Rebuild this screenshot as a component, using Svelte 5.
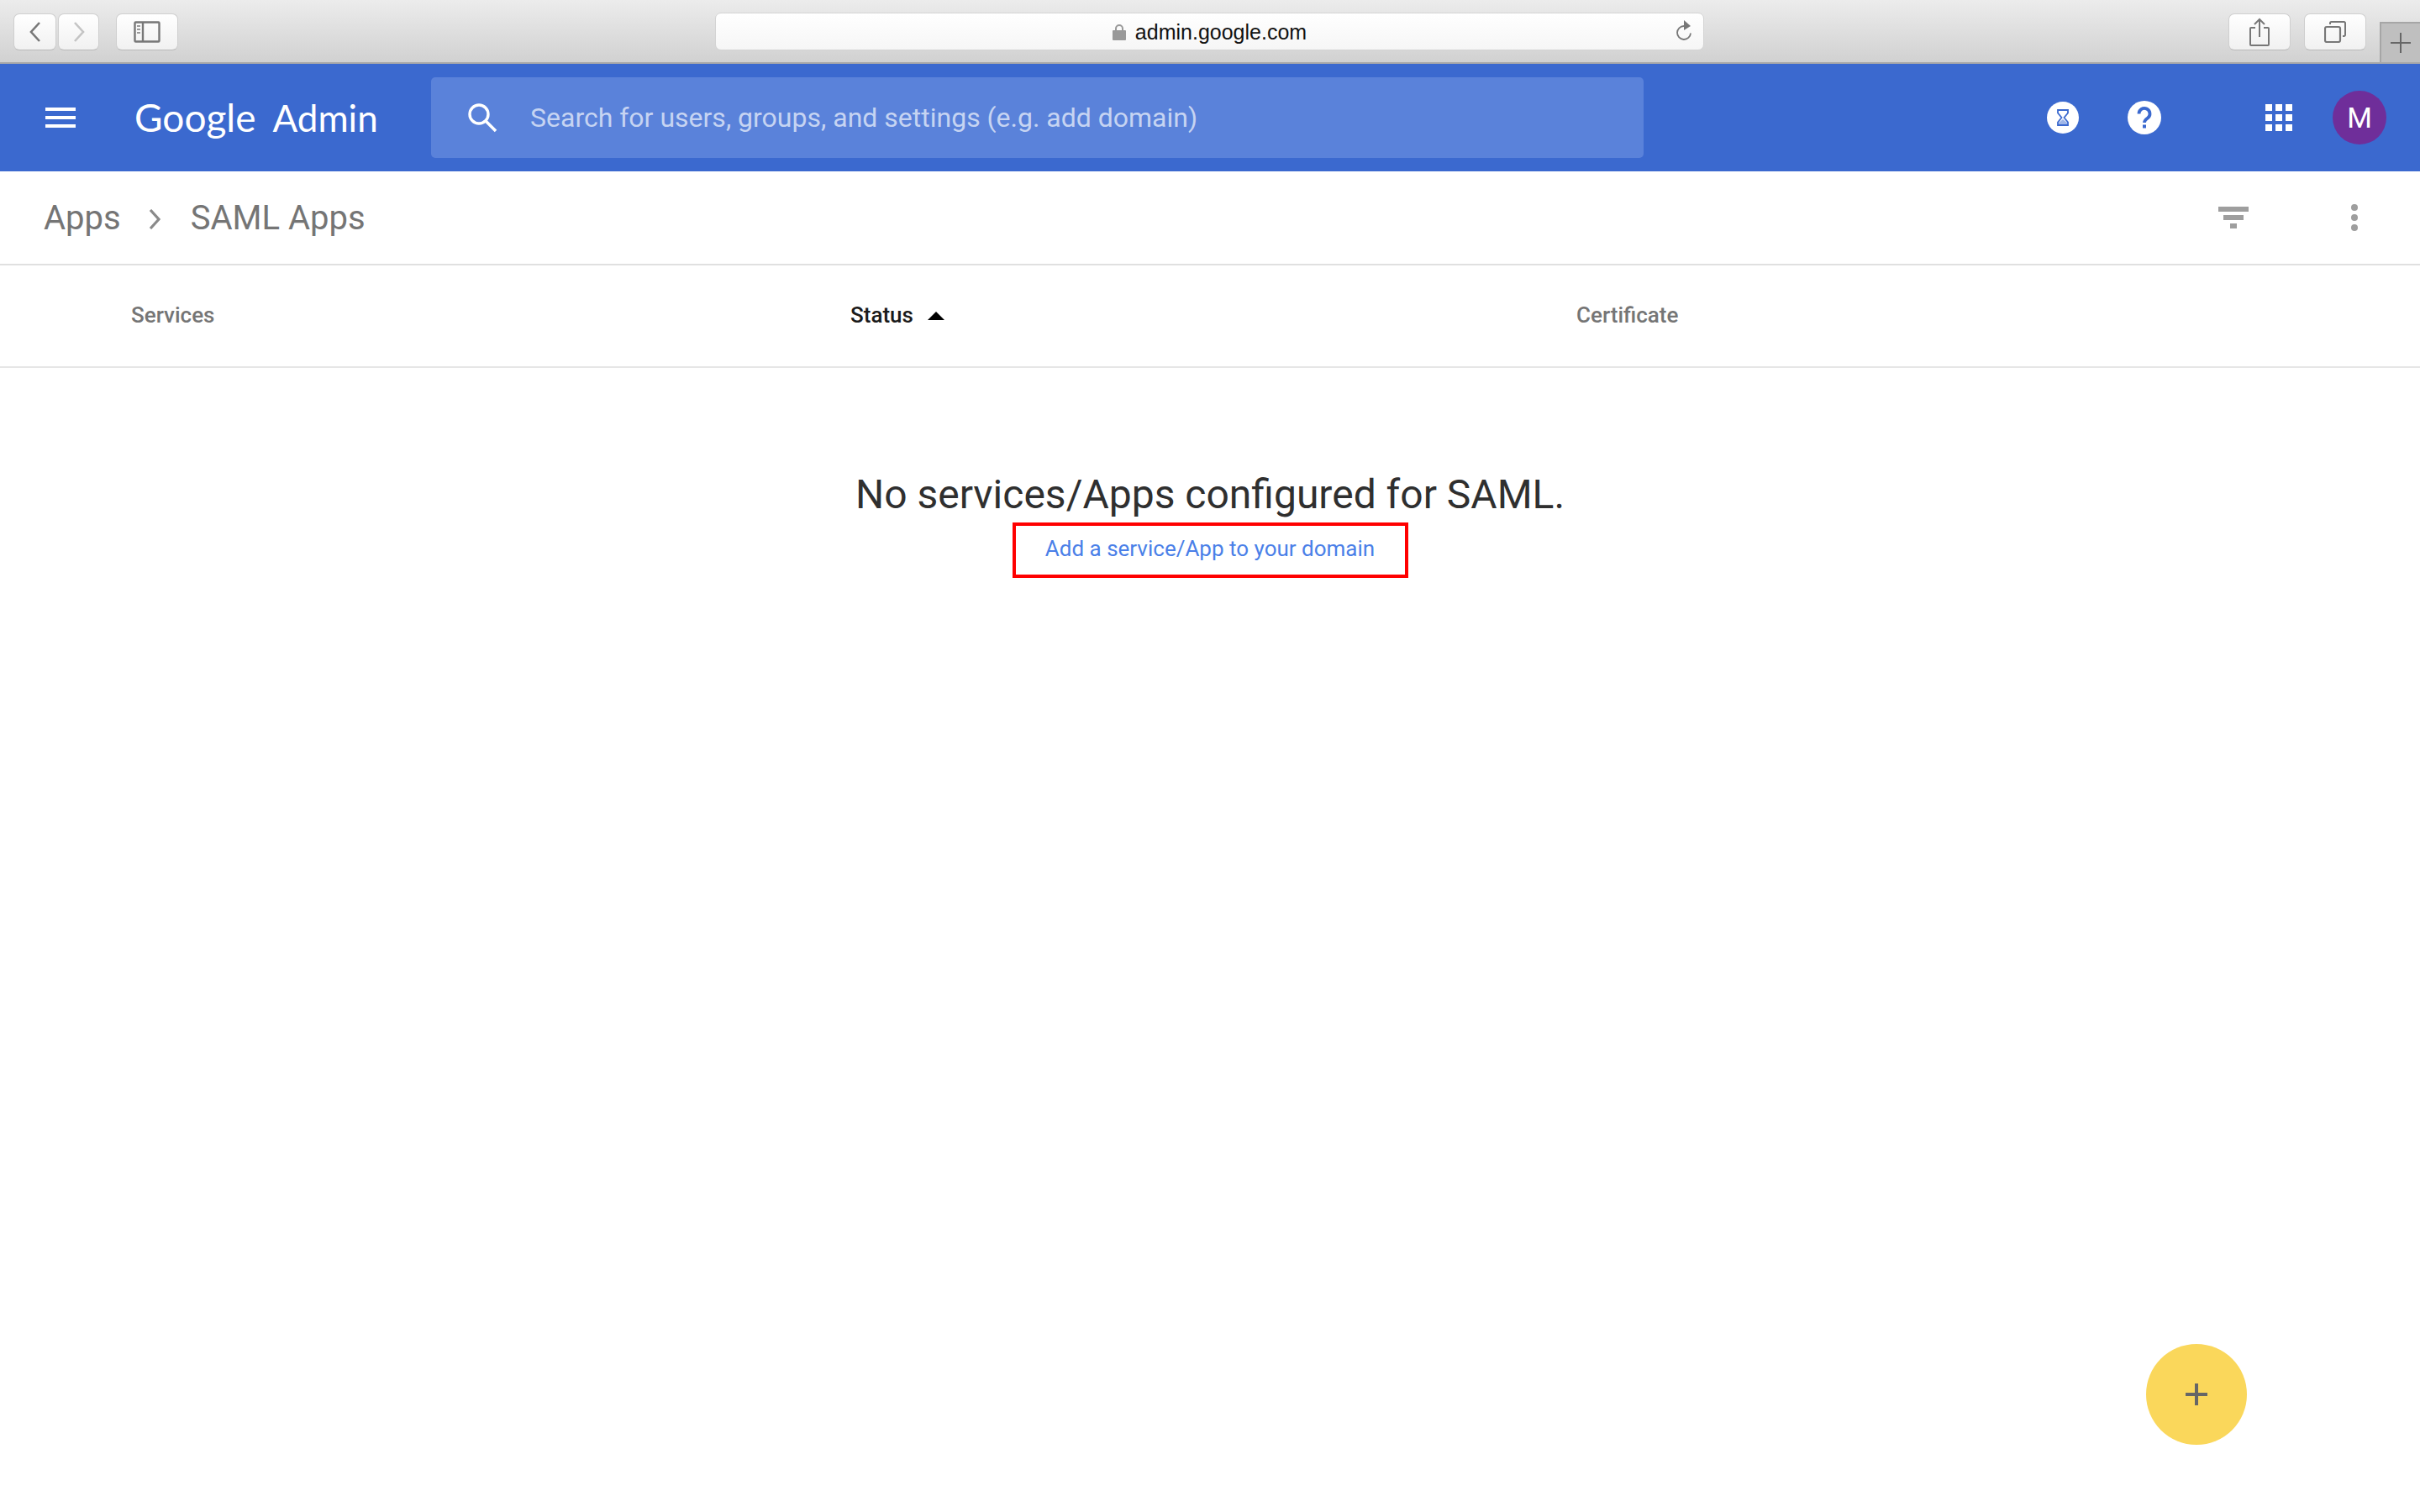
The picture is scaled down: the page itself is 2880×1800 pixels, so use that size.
<script>
  // Safari window with the Google Admin SAML Apps page, empty state
  const columns = [
    { label: "Services", width: 856 },
    { label: "Status", width: 864, sorted: true },
    { label: "Certificate" }
  ];
</script>

<div class="page">
  <div class="chrome">
    <div class="nav-group">
      <button class="tool back" aria-label="Back">
        <svg width="20" height="26" viewBox="0 0 20 26"><path d="M15 2 5 13l10 11" fill="none" stroke="#777" stroke-width="2.6" /></svg>
      </button>
      <button class="tool forward" aria-label="Forward">
        <svg width="20" height="26" viewBox="0 0 20 26"><path d="M5 2l10 11L5 24" fill="none" stroke="#c4c4c4" stroke-width="2.6" /></svg>
      </button>
    </div>
    <button class="tool sidebar" aria-label="Sidebar">
      <svg width="32" height="26" viewBox="0 0 32 26">
        <rect x="1.5" y="1.5" width="29" height="23" rx="1" fill="none" stroke="#777" stroke-width="2.4" />
        <path d="M11 1.5v23" stroke="#777" stroke-width="2.4" />
        <path d="M4 6h4M4 10h4M4 14h4" stroke="#999" stroke-width="2" />
      </svg>
    </button>
    <div class="address">
      <svg class="lock" width="16" height="20" viewBox="0 0 16 20">
        <path d="M4 9V6a4 4 0 0 1 8 0v3" fill="none" stroke="#999" stroke-width="2" />
        <rect y="8" width="16" height="12" rx="1" fill="#999" />
      </svg>
      <span class="url">admin.google.com</span>
      <svg class="reload" width="20" height="28" viewBox="0 0 20 28">
        <path d="M10 8a8 8 0 1 0 8 8.500" fill="none" stroke="#777" stroke-width="1.800" />
        <path d="M10 1l8 7-8 5z" fill="#777" />
      </svg>
    </div>
    <button class="tool share" aria-label="Share">
      <svg width="24" height="34" viewBox="0 0 24 34">
        <path d="M7 12H2a1 1 0 0 0-1 1v19a1 1 0 0 0 1 1h20a1 1 0 0 0 1-1V13a1 1 0 0 0-1-1h-5" fill="none" stroke="#777" stroke-width="2" />
        <path d="M12 23V2M6 8l6-6 6 6" fill="none" stroke="#777" stroke-width="2" />
      </svg>
    </button>
    <button class="tool tabs" aria-label="Tabs">
      <svg width="26" height="26" viewBox="0 0 26 26">
        <rect x="1" y="7" width="18" height="18" rx="2" fill="none" stroke="#777" stroke-width="2.2" />
        <path d="M7 4V2.5A1.5 1.5 0 0 1 8.500 1h15A1.500 1.500 0 0 1 25 2.500v14a1.500 1.500 0 0 1-1.500 1.500H22" fill="none" stroke="#777" stroke-width="2" />
      </svg>
    </button>
    <div class="new-tab">
      <svg width="24" height="24" viewBox="0 0 24 24"><path d="M12 0v24M0 12h24" stroke="#666" stroke-width="2" /></svg>
    </div>
  </div>

  <header class="topbar">
    <div class="menu"><span></span><span></span><span></span></div>
    <div class="logo"><span class="google">Google</span><span class="admin">Admin</span></div>
    <div class="search">
      <svg width="36" height="36" viewBox="0 0 36 36">
        <circle cx="14" cy="14" r="11" fill="none" stroke="#fff" stroke-width="3.4" />
        <path d="M22 22l12 12" stroke="#fff" stroke-width="3.6" />
      </svg>
      <span>Search for users, groups, and settings (e.g. add domain)</span>
    </div>
    <svg class="hourglass" width="38" height="38" viewBox="0 0 38 38">
      <circle cx="19" cy="19" r="19" fill="#fff" />
      <path d="M13 10h12v3.500L20.500 19l4.500 5.500V28H13v-3.500L17.500 19 13 13.500z" fill="none" stroke="#3b69cf" stroke-width="1.800" />
      <path d="M14 27v-2l5-4 5 4v2z" fill="#9fb6e8" />
    </svg>
    <svg class="help" width="40" height="40" viewBox="0 0 40 40">
      <circle cx="20" cy="20" r="20" fill="#fff" />
      <path d="M13.500 15.500a6.500 6.500 0 1 1 10.500 5c-2.300 1.800-4 2.800-4 5.500" fill="none" stroke="#3b69cf" stroke-width="3.800" />
      <rect x="18" y="28.500" width="4" height="4" fill="#3b69cf" />
    </svg>
    <svg class="apps" width="32" height="32" viewBox="0 0 32 32" fill="#fff">
      {#each [0, 12, 24] as y}
        {#each [0, 12, 24] as x}
          <rect {x} {y} width="8" height="8" />
        {/each}
      {/each}
    </svg>
    <div class="avatar">M</div>
  </header>

  <main class="content">
    <div class="breadcrumb">
      <span>Apps</span>
      <svg width="15" height="24" viewBox="0 0 15 24"><path d="M2 1l10 11L2 23" fill="none" stroke="#8a8a8a" stroke-width="3.200" /></svg>
      <span>SAML Apps</span>
      <svg class="filter" width="36" height="26" viewBox="0 0 36 26" fill="#9e9e9e">
        <rect width="36" height="6" />
        <rect x="6" y="10" width="24" height="6" />
        <rect x="14" y="20" width="8" height="6" />
      </svg>
      <svg class="more" width="8" height="32" viewBox="0 0 8 32" fill="#9e9e9e">
        <circle cx="4" cy="4" r="4" />
        <circle cx="4" cy="16" r="4" />
        <circle cx="4" cy="28" r="4" />
      </svg>
    </div>

    <div class="table-head">
      {#each columns as col}
        <div class="col" class:sorted={col.sorted} style:width={col.width ? col.width + "px" : null}>
          {col.label}
          {#if col.sorted}<span class="arrow"></span>{/if}
        </div>
      {/each}
    </div>

    <div class="empty">
      <h1>No services/Apps configured for SAML.</h1>
      <a class="add-link" href="#add">Add a service/App to your domain</a>
    </div>

    <button class="fab" aria-label="Add">
      <svg width="26" height="26" viewBox="0 0 26 26"><path d="M13 0v26M0 13h26" stroke="#666" stroke-width="4" /></svg>
    </button>
  </main>
</div>

<style>
  :global(body) {
    margin: 0;
    background: #fff;
  }

  .page {
    width: 2880px;
    height: 1800px;
    overflow: hidden;
    display: flex;
    flex-direction: column;
    font-family: Roboto, "Liberation Sans", sans-serif;
  }

  /* browser chrome */
  .chrome {
    height: 74px;
    flex: none;
    display: flex;
    align-items: flex-start;
    box-sizing: content-box;
    border-bottom: 2px solid #a9a9a9;
    background: linear-gradient(#ececec, #d1d1d1);
  }

  .nav-group {
    display: flex;
    gap: 2px;
    margin: 16px 0 0 16px;
  }

  .tool {
    height: 44px;
    margin-top: 16px;
    padding: 0;
    display: flex;
    align-items: center;
    justify-content: center;
    border: 1px solid #cfcfcf;
    border-bottom-color: #b8b8b8;
    border-radius: 7px;
    background: linear-gradient(#fff, #f1f1f1);
    box-sizing: border-box;
  }

  .nav-group .tool {
    margin-top: 0;
  }

  .back {
    width: 51px;
  }

  .forward {
    width: 49px;
  }

  .sidebar {
    width: 74px;
    margin-left: 20px;
  }

  .address {
    position: relative;
    width: 1177px;
    height: 45px;
    margin: 15px 0 0 639px;
    display: flex;
    align-items: center;
    justify-content: center;
    box-sizing: border-box;
    border: 1px solid #d4d4d4;
    border-radius: 7px;
    background: linear-gradient(#fff, #f6f6f6);
  }

  .lock {
    margin-right: 11px;
  }

  .url {
    position: relative;
    top: 1px;
    font-family: "Liberation Sans", Arial, sans-serif;
    font-size: 25px;
    color: #111;
  }

  .reload {
    position: absolute;
    right: 13px;
    top: 7px;
  }

  .share {
    width: 74px;
    margin-left: 624px;
  }

  .tabs {
    width: 74px;
    margin-left: 16px;
  }

  .new-tab {
    width: 48px;
    height: 48px;
    margin: 26px 0 0 16px;
    display: flex;
    align-items: center;
    justify-content: center;
    box-sizing: border-box;
    border-left: 2px solid #a6a6a6;
    border-top: 2px solid #a6a6a6;
    background: #bfbfbf;
  }

  /* blue admin bar */
  .topbar {
    height: 128px;
    flex: none;
    display: flex;
    align-items: center;
    background: #3b69cf;
    color: #fff;
  }

  .menu {
    width: 36px;
    margin-left: 54px;
    display: flex;
    flex-direction: column;
    gap: 6px;
  }

  .menu span {
    height: 4px;
    background: #fff;
  }

  .logo {
    width: 287px;
    margin-left: 70px;
    padding-bottom: 2px;
    display: flex;
    align-items: baseline;
    gap: 20px;
    font-family: Lato, sans-serif;
    font-size: 46px;
    white-space: nowrap;
  }

  .admin {
    font-size: 44px;
  }

  .search {
    width: 1443px;
    height: 96px;
    margin-left: 66px;
    padding-left: 43px;
    display: flex;
    align-items: center;
    gap: 39px;
    box-sizing: border-box;
    border-radius: 5px;
    background: #5a82da;
    font-size: 32px;
    color: #c6d4f2;
    white-space: nowrap;
  }

  .hourglass {
    margin-left: 480px;
  }

  .help {
    margin-left: 58px;
  }

  .apps {
    margin-left: 124px;
  }

  .avatar {
    width: 64px;
    height: 64px;
    margin-left: 48px;
    display: flex;
    align-items: center;
    justify-content: center;
    border-radius: 50%;
    background: #6f2e9a;
    font-size: 34px;
  }

  /* page body */
  .content {
    position: relative;
    flex: 1;
  }

  .breadcrumb {
    height: 110px;
    padding-left: 52px;
    display: flex;
    align-items: center;
    border-bottom: 2px solid #e0e0e0;
    font-size: 40px;
    color: #757575;
    box-sizing: content-box;
  }

  .breadcrumb > svg:first-of-type {
    margin: 4px 35px 0 33px;
  }

  .filter {
    margin-left: auto;
  }

  .more {
    margin: 0 74px 0 122px;
  }

  .table-head {
    height: 118px;
    padding: 0 0 2px 156px;
    display: flex;
    align-items: center;
    border-bottom: 2px solid #e6e6e6;
    font-size: 26px;
    font-weight: 500;
    color: #757575;
  }

  .col {
    display: flex;
    align-items: center;
  }

  .col.sorted {
    color: #1a1a1a;
  }

  .arrow {
    margin: 2px 0 0 17px;
    border-left: 10px solid transparent;
    border-right: 10px solid transparent;
    border-bottom: 10px solid #000;
  }

  .empty {
    padding-top: 118px;
    display: flex;
    flex-direction: column;
    align-items: center;
  }

  h1 {
    margin: 0;
    height: 66px;
    font-size: 48px;
    font-weight: 400;
    line-height: 66px;
    color: #2f2f2f;
  }

  .add-link {
    width: 471px;
    height: 66px;
    display: flex;
    align-items: center;
    justify-content: center;
    padding-bottom: 4px;
    box-sizing: border-box;
    border: 4px solid #f00;
    font-size: 26px;
    color: #4a7fe8;
    text-decoration: none;
    white-space: nowrap;
  }

  .fab {
    position: absolute;
    right: 206px;
    top: 1396px;
    width: 120px;
    height: 120px;
    padding: 0;
    display: flex;
    align-items: center;
    justify-content: center;
    border: none;
    border-radius: 50%;
    background: #fad75b;
  }
</style>
